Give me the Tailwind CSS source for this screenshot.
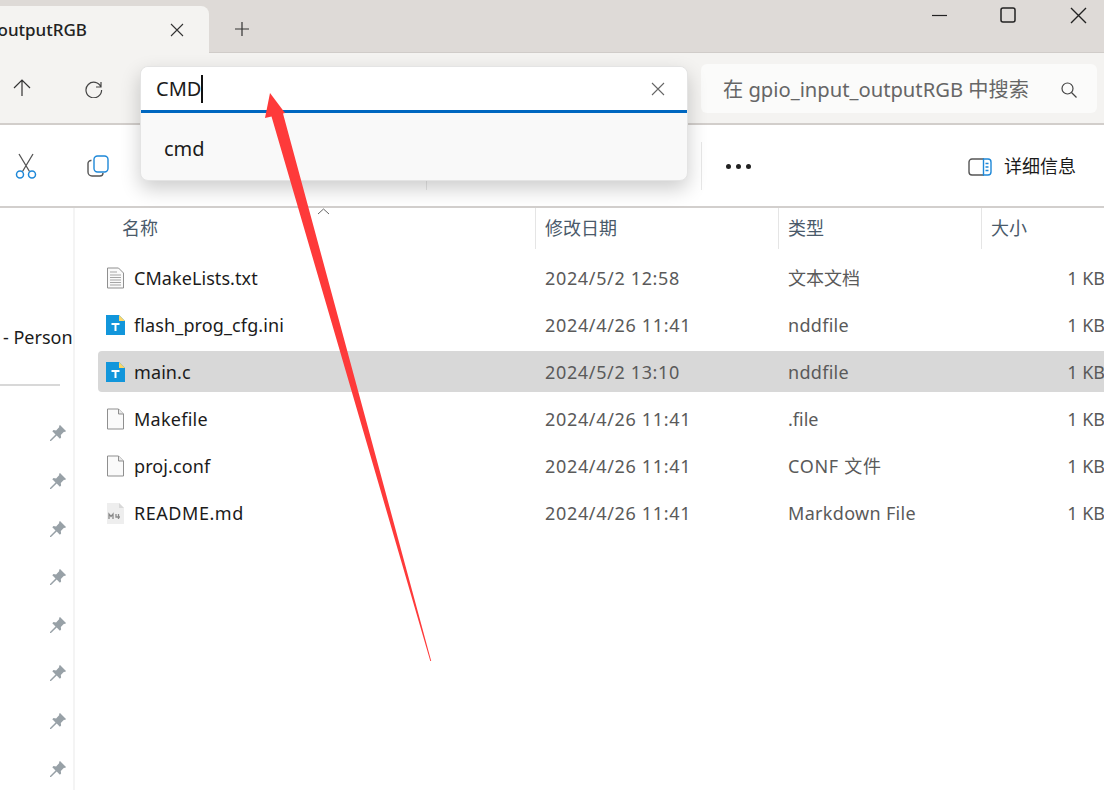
<!DOCTYPE html>
<html lang="zh-CN">
<head>
    <meta charset="UTF-8">
    <title>gpio_input_outputRGB</title>
    <script src="https://cdn.jsdelivr.net/npm/@tailwindcss/browser@4"></script>
</head>
<body class="bg-white overflow-hidden">
<div class="relative w-[1104px] h-[790px] overflow-hidden flex flex-col text-[#1b1b1b] font-['Noto_Sans','Noto_Sans_CJK_SC',sans-serif]">

    <!-- title bar -->
    <div class="h-[53px] shrink-0 bg-[#dedad7] border-b border-[#d0ccc9] flex items-start">
        <div class="w-[209px] h-[47px] mt-[6px] bg-[#f4f3f1] rounded-tr-lg flex items-center justify-end pr-[24px] relative z-10 overflow-hidden">
            <span class="absolute right-[122px] top-[11px] text-[17px] font-medium text-[#222] whitespace-nowrap">outputRGB</span>
            <svg width="16" height="16" viewBox="0 0 16 16" fill="none" stroke="#333" stroke-width="1.1"><path d="M2 2l12 12M14 2L2 14"/></svg>
        </div>
        <div class="ml-[25px] mt-[21px]">
            <svg width="16" height="16" viewBox="0 0 16 16" fill="none" stroke="#333" stroke-width="1.2"><path d="M8 1v14M1 8h14"/></svg>
        </div>
        <div class="ml-auto flex items-center mt-[6px] pr-[17px]">
            <svg width="17" height="18" viewBox="0 0 17 18" fill="none" stroke="#222" stroke-width="1.2"><path d="M1 9.500h15"/></svg>
            <svg class="ml-[52px]" width="16" height="16" viewBox="0 0 16 16" fill="none" stroke="#222" stroke-width="1.5"><rect x="1" y="1" width="14" height="14" rx="2"/></svg>
            <svg class="ml-[54px]" width="17" height="17" viewBox="0 0 17 17" fill="none" stroke="#222" stroke-width="1.4"><path d="M1 1l15 15M16 1L1 16"/></svg>
        </div>
    </div>

    <!-- address row -->
    <div class="h-[72px] shrink-0 bg-[#f4f3f1] border-b-2 border-[#d2cecb] flex items-center">
        <svg class="ml-[12px]" width="20" height="20" viewBox="0 0 20 20" fill="none" stroke="#333" stroke-width="1.2"><path d="M10 2v16M2 10l8-8 8 8"/></svg>
        <svg class="ml-[52px]" width="20" height="20" viewBox="0 0 20 20" fill="none" stroke="#444" stroke-width="1.2"><path d="M17 4v5h-5M17 9a7.800 7.800 0 1 0 .6 3"/></svg>
        <div class="w-[548px] ml-[36px]"></div>
        <div class="ml-[13px] w-[396px] h-[49px] bg-[#fbfbfa] rounded-md flex items-center pl-[22px] pr-[19px] justify-between">
            <span class="text-[20.2px] text-[#666] whitespace-nowrap pt-[2px]">在 gpio_input_outputRGB 中搜索</span>
            <svg class="mt-[3px]" width="18" height="18" viewBox="0 0 18 18" fill="none" stroke="#444" stroke-width="1.2"><circle cx="7.500" cy="7.500" r="5.500"/><path d="M11.500 11.500l5 5"/></svg>
        </div>
    </div>

    <!-- command bar -->
    <div class="h-[83px] shrink-0 bg-white border-b-2 border-[#d2cfcd] flex items-center">
        <svg class="ml-[15px]" width="22" height="26" viewBox="0 0 22 26" fill="none" stroke-width="1.3"><path d="M4 1l10.500 17.500M18 1L7.500 18.500" stroke="#555"/><circle cx="5" cy="21.500" r="3.500" stroke="#1e88d8" stroke-width="1.500"/><circle cx="17" cy="21.500" r="3.500" stroke="#1e88d8" stroke-width="1.500"/></svg>
        <svg class="ml-[50px]" width="22" height="22" viewBox="0 0 22 22" fill="none" stroke-width="1.4"><path d="M4.500 5.500A3 3 0 0 0 1 8.500v8.500a4 4 0 0 0 4 4h8a3 3 0 0 0 3-3" stroke="#555"/><rect x="7" y="1" width="14" height="16" rx="3.500" stroke="#1e88d8"/></svg>
        <div class="ml-[317px] w-px h-[48px] bg-[#e8e8e8]"></div>
        <div class="ml-auto w-px h-[48px] bg-[#e8e8e8] mr-[24px]"></div>
        <div class="flex gap-[5px] mr-[353px] mt-[2px]">
            <span class="w-[5px] h-[5px] rounded-full bg-[#222]"></span><span class="w-[5px] h-[5px] rounded-full bg-[#222]"></span><span class="w-[5px] h-[5px] rounded-full bg-[#222]"></span>
        </div>
    </div>

    <div class="flex-1 flex min-h-0">
        <!-- nav pane -->
        <div class="w-[75px] shrink-0 border-r-2 border-[#f4f4f4] relative overflow-hidden">
            <div class="h-[145px] flex items-end pb-[2px]"><span class="pl-[3px] text-[18px] text-[#1b1b1b] whitespace-nowrap">- Person</span></div>
            <div class="h-[2px] w-[60px] bg-[#d8d8d8] mt-[31px]"></div>
            <div class="flex flex-col items-end pr-[7px] pt-[39px] gap-[32px]">
                <svg width="16" height="16" viewBox="0 0 16 16" fill="#98a1a7"><path d="M10 0l6 6-1 1-1-.3-3.200 3.200.3 2.600-1.200 1.200-3.200-3.200L1 16l-1 0 0-1 5.500-5.500-3.200-3.200 1.200-1.200 2.600.3L9.300 2 9 1z"/></svg>
                <svg width="16" height="16" viewBox="0 0 16 16" fill="#98a1a7"><path d="M10 0l6 6-1 1-1-.3-3.200 3.200.3 2.600-1.200 1.200-3.200-3.200L1 16l-1 0 0-1 5.500-5.500-3.200-3.200 1.200-1.200 2.600.3L9.300 2 9 1z"/></svg>
                <svg width="16" height="16" viewBox="0 0 16 16" fill="#98a1a7"><path d="M10 0l6 6-1 1-1-.3-3.200 3.200.3 2.600-1.200 1.200-3.200-3.200L1 16l-1 0 0-1 5.500-5.500-3.200-3.200 1.200-1.200 2.600.3L9.300 2 9 1z"/></svg>
                <svg width="16" height="16" viewBox="0 0 16 16" fill="#98a1a7"><path d="M10 0l6 6-1 1-1-.3-3.200 3.200.3 2.600-1.200 1.200-3.200-3.200L1 16l-1 0 0-1 5.500-5.500-3.200-3.200 1.200-1.200 2.600.3L9.300 2 9 1z"/></svg>
                <svg width="16" height="16" viewBox="0 0 16 16" fill="#98a1a7"><path d="M10 0l6 6-1 1-1-.3-3.200 3.200.3 2.600-1.200 1.200-3.200-3.200L1 16l-1 0 0-1 5.500-5.500-3.200-3.200 1.200-1.200 2.600.3L9.300 2 9 1z"/></svg>
                <svg width="16" height="16" viewBox="0 0 16 16" fill="#98a1a7"><path d="M10 0l6 6-1 1-1-.3-3.200 3.200.3 2.600-1.200 1.200-3.200-3.200L1 16l-1 0 0-1 5.500-5.500-3.200-3.200 1.200-1.200 2.600.3L9.300 2 9 1z"/></svg>
                <svg width="16" height="16" viewBox="0 0 16 16" fill="#98a1a7"><path d="M10 0l6 6-1 1-1-.3-3.200 3.200.3 2.600-1.200 1.200-3.200-3.200L1 16l-1 0 0-1 5.500-5.500-3.200-3.200 1.200-1.200 2.600.3L9.300 2 9 1z"/></svg>
                <svg width="16" height="16" viewBox="0 0 16 16" fill="#98a1a7"><path d="M10 0l6 6-1 1-1-.3-3.200 3.200.3 2.600-1.200 1.200-3.200-3.200L1 16l-1 0 0-1 5.500-5.500-3.200-3.200 1.200-1.200 2.600.3L9.300 2 9 1z"/></svg>
            </div>
        </div>

        <!-- file list -->
        <div class="flex-1 min-w-0 pl-[23px] overflow-hidden">
            <div class="grid grid-cols-[438px_243px_203px_123px] h-[41px] items-center text-[18px] text-[#4a5a6a]">
                <div class="h-full flex items-center pl-[24px] border-r border-[#e5e5e5] relative">名称
                    <svg class="absolute left-[219px] top-[0px]" width="13" height="7" viewBox="0 0 13 7" fill="none" stroke="#666"><path d="M1 6l5.500-5 5.500 5"/></svg>
                </div>
                <div class="h-full flex items-center pl-[9px] border-r border-[#e5e5e5]">修改日期</div>
                <div class="h-full flex items-center pl-[9px] border-r border-[#e5e5e5]">类型</div>
                <div class="h-full flex items-center pl-[9px]">大小</div>
            </div>
            <div class="pt-[8px] flex flex-col gap-[6px] text-[18px] text-[#5a5a5a]">
                <div class="grid grid-cols-[438px_243px_203px_123px] h-[41px] items-center rounded-l-sm pt-px">
                    <div class="flex items-center pl-[8px] gap-[9px] text-[#1b1b1b] tracking-[0.07px]">
                        <svg width="19" height="22" viewBox="0 0 19 22" fill="#fafafa" stroke="#8f8f8f"><path d="M1.500 1h11l5 5v15h-16z"/><path d="M4 5h7M4 8h11M4 10.500h11M4 13h11M4 15.500h11M4 18h11" stroke="#a5a5a5"/></svg>
                        CMakeLists.txt
                    </div>
                    <div class="pl-[9px] tracking-[0.65px]">2024/5/2 12:58</div><div class="pl-[9px]">文本文档</div><div class="text-right whitespace-nowrap">1 KB</div>
                </div>
                <div class="grid grid-cols-[438px_243px_203px_123px] h-[41px] items-center rounded-l-sm pt-px">
                    <div class="flex items-center pl-[8px] gap-[9px] text-[#1b1b1b] tracking-[0.12px]">
                        <svg width="19" height="20" viewBox="0 0 19 20"><path d="M0 0h13l6 6v14H0z" fill="#1296db"/><path d="M13 0l6 6h-6z" fill="#fbd669"/><path d="M5.500 8h8v2h-3v6h-2v-6h-3z" fill="#fff"/></svg>
                        flash_prog_cfg.ini
                    </div>
                    <div class="pl-[9px] tracking-[0.67px]">2024/4/26 11:41</div><div class="pl-[9px] tracking-[0.3px]">nddfile</div><div class="text-right whitespace-nowrap">1 KB</div>
                </div>
                <div class="grid grid-cols-[438px_243px_203px_123px] h-[41px] items-center rounded-l-sm bg-[#d8d8d8] pt-px">
                    <div class="flex items-center pl-[8px] gap-[9px] text-[#1b1b1b] tracking-[0.1px]">
                        <svg width="19" height="20" viewBox="0 0 19 20"><path d="M0 0h13l6 6v14H0z" fill="#1296db"/><path d="M13 0l6 6h-6z" fill="#fbd669"/><path d="M5.500 8h8v2h-3v6h-2v-6h-3z" fill="#fff"/></svg>
                        main.c
                    </div>
                    <div class="pl-[9px] tracking-[0.65px]">2024/5/2 13:10</div><div class="pl-[9px] tracking-[0.3px]">nddfile</div><div class="text-right whitespace-nowrap">1 KB</div>
                </div>
                <div class="grid grid-cols-[438px_243px_203px_123px] h-[41px] items-center rounded-l-sm pt-px">
                    <div class="flex items-center pl-[8px] gap-[9px] text-[#1b1b1b] tracking-[0.25px]">
                        <svg width="19" height="22" viewBox="0 0 19 22" fill="#fafafa" stroke="#8f8f8f"><path d="M1.500 1h11l5 5v15h-16z"/><path d="M12.500 1v5h5" fill="#e8e8e8"/></svg>
                        Makefile
                    </div>
                    <div class="pl-[9px] tracking-[0.67px]">2024/4/26 11:41</div><div class="pl-[9px]">.file</div><div class="text-right whitespace-nowrap">1 KB</div>
                </div>
                <div class="grid grid-cols-[438px_243px_203px_123px] h-[41px] items-center rounded-l-sm pt-px">
                    <div class="flex items-center pl-[8px] gap-[9px] text-[#1b1b1b] tracking-[0.1px]">
                        <svg width="19" height="22" viewBox="0 0 19 22" fill="#fafafa" stroke="#8f8f8f"><path d="M1.500 1h11l5 5v15h-16z"/><path d="M12.500 1v5h5" fill="#e8e8e8"/></svg>
                        proj.conf
                    </div>
                    <div class="pl-[9px] tracking-[0.67px]">2024/4/26 11:41</div><div class="pl-[9px] tracking-[0.7px]">CONF 文件</div><div class="text-right whitespace-nowrap">1 KB</div>
                </div>
                <div class="grid grid-cols-[438px_243px_203px_123px] h-[41px] items-center rounded-l-sm pt-px">
                    <div class="flex items-center pl-[8px] gap-[9px] text-[#1b1b1b] tracking-[0.55px]">
                        <svg width="19" height="22" viewBox="0 0 19 22"><path d="M1 1h12l5 5v16H1z" fill="#eeeeee"/><path d="M13 1v5h5" fill="#d8d8d8"/><path d="M3 17v-5l2 2.500L7 12v5M10 12v3h4M12.500 12v5" fill="none" stroke="#8a8a8a" stroke-width="1.300"/></svg>
                        README.md
                    </div>
                    <div class="pl-[9px] tracking-[0.67px]">2024/4/26 11:41</div><div class="pl-[9px] tracking-[0.32px]">Markdown File</div><div class="text-right whitespace-nowrap">1 KB</div>
                </div>
            </div>
        </div>
    </div>

    <!-- details toggle sits over the command bar -->
    <div class="absolute left-[968px] top-[153px] flex items-center gap-[12px]">
        <svg width="24" height="18" viewBox="0 0 24 18" fill="none" stroke-width="1.400"><path d="M16 1H4a3 3 0 0 0-3 3v10a3 3 0 0 0 3 3h12" stroke="#555"/><path d="M15.500 1H20a3 3 0 0 1 3 3v10a3 3 0 0 1-3 3h-4.500z" stroke="#1e88d8"/><path d="M17.500 5.500h3M17.500 9h3M17.500 12.500h3" stroke="#1e88d8"/></svg>
        <span class="text-[18px] text-[#1b1b1b] whitespace-nowrap">详细信息</span>
    </div>

    <!-- address box with suggestion dropdown -->
    <div class="absolute left-[140px] top-[66px] w-[548px] h-[115px] rounded-lg bg-[#f9f9f9] shadow-[0_8px_20px_rgba(0,0,0,0.2)] border border-[#e4e4e4] overflow-hidden">
        <div class="h-[46px] bg-white border-b-[3px] border-[#0067c0] flex items-center pl-[15px] pr-[22px] justify-between">
            <span class="text-[20px] text-[#1b1b1b] flex items-center pt-px">CMD<span class="w-[2px] h-[28px] bg-[#111]"></span></span>
            <svg width="14" height="14" viewBox="0 0 14 14" fill="none" stroke="#666" stroke-width="1.100"><path d="M1 1l12 12M13 1L1 13"/></svg>
        </div>
        <div class="pl-[23px] pt-[26px] text-[20px] text-[#1b1b1b] leading-none">cmd</div>
    </div>

    <!-- red annotation arrow -->
    <svg class="absolute left-0 top-0 pointer-events-none" width="1104" height="790" viewBox="0 0 1104 790"><path d="M270 93L285 113 283 113.500 431.200 661 430.300 661 271.500 116.500 265 118z" fill="#fe3a3a"/></svg>
</div>
</body>
</html>
